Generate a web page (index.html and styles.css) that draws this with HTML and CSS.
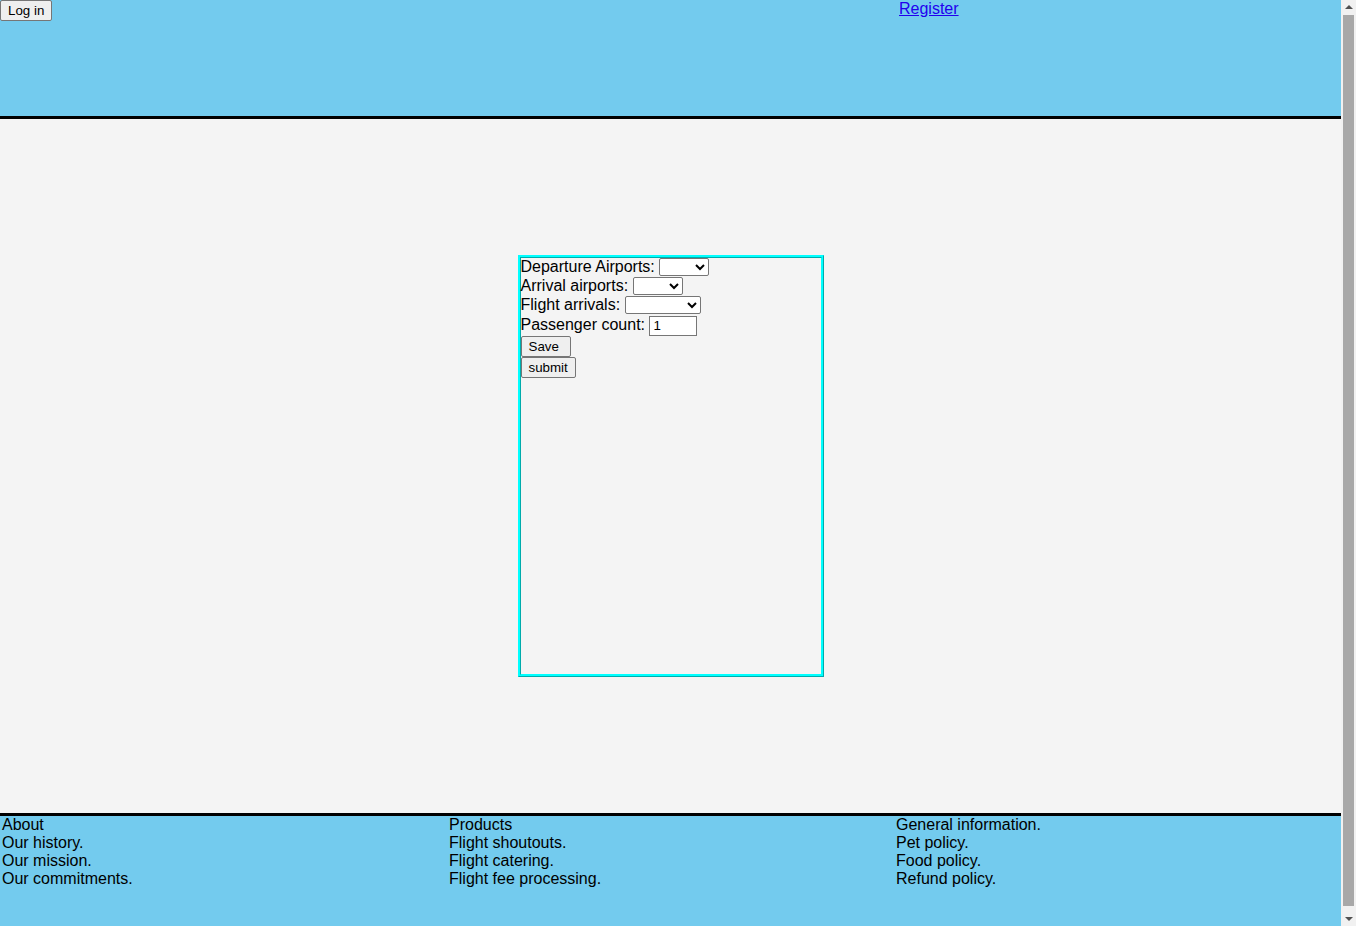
FILE: index.html
```html
<!DOCTYPE html>
<html>
<head>
<meta charset="utf-8">
<title>Flights</title>
<link rel="stylesheet" href="styles.css">
</head>
<body>
<div class="page">
  <header class="site-header">
    <div class="hcol"><button class="btn">Log in</button></div>
    <div class="hcol"></div>
    <div class="hcol hcol-right"><a href="#" class="reg-link">Register</a></div>
  </header>
  <main class="main">
    <form class="booking">
      <div class="row">Departure Airports: <select class="sel sel-a"><option></option></select></div>
      <div class="row">Arrival airports: <select class="sel sel-a"><option></option></select></div>
      <div class="row">Flight arrivals: <select class="sel sel-b"><option></option></select></div>
      <div class="row row-input">Passenger count: <input class="count" type="text" value="1"></div>
      <div class="brow"><button type="button" class="btn btn-save">Save</button></div>
      <div class="brow"><button type="button" class="btn">submit</button></div>
    </form>
  </main>
  <footer class="site-footer">
    <div class="fcol">
      <div>About</div>
      <div>Our history.</div>
      <div>Our mission.</div>
      <div>Our commitments.</div>
    </div>
    <div class="fcol">
      <div>Products</div>
      <div>Flight shoutouts.</div>
      <div>Flight catering.</div>
      <div>Flight fee processing.</div>
    </div>
    <div class="fcol">
      <div>General information.</div>
      <div>Pet policy.</div>
      <div>Food policy.</div>
      <div>Refund policy.</div>
    </div>
  </footer>
</div>
<div class="scrollbar" aria-hidden="true">
  <div class="sb-arrow sb-up"></div>
  <div class="sb-track"><div class="sb-thumb"></div></div>
  <div class="sb-arrow sb-down"></div>
</div>
</body>
</html>
```
FILE: styles.css
```css
html, body {
  margin: 0;
  padding: 0;
}
html {
  overflow: hidden;
}
body {
  font-family: "Liberation Sans", Arial, sans-serif;
  font-size: 16px;
  color: #000;
  background: #f4f4f4;
}
.page {
  margin-right: 15px;
}
.site-header {
  display: grid;
  grid-template-columns: 1fr 1fr 1fr;
  height: 116px;
  background: #73cbee;
  border-bottom: 3px solid #000;
}
.hcol-right {
  padding-left: 5px;
}
.reg-link {
  color: #2200ee;
  text-decoration: underline;
  line-height: 17px;
}
.btn {
  font-family: "Liberation Sans", Arial, sans-serif;
  font-size: 13.333px;
  margin: 0;
  padding: 1px 7px;
  height: 21px;
  background: #efefef;
  border: 1px solid #767676;
  border-radius: 2px;
  color: #000;
}
.main {
  height: 694px;
  display: flex;
  align-items: center;
  justify-content: center;
}
.booking {
  width: 300px;
  height: 416px;
  border: 3px ridge #00ffff;
  margin: 0;
}
.row {
  height: 19px;
  line-height: 18px;
  white-space: nowrap;
}
.row-input {
  height: 21px;
  line-height: 20px;
}
.sel {
  font-family: "Liberation Sans", Arial, sans-serif;
  font-size: 13.333px;
  height: 18px;
  vertical-align: middle;
  margin: -1px 0 0 0;
  background: #fff;
  border: 1px solid #767676;
  border-radius: 2px;
}
.sel-a { width: 50px; }
.sel-b { width: 76px; }
.count {
  font-family: "Liberation Sans", Arial, sans-serif;
  font-size: 13.333px;
  width: 48px;
  height: 20px;
  box-sizing: border-box;
  padding: 1px 3px;
  border: 1px solid #767676;
  vertical-align: middle;
  margin: 0;
}
.brow {
  height: 21px;
}
.btn-save {
  width: 50px;
  text-align: left;
  padding-left: 7px;
}
.site-footer {
  display: grid;
  grid-template-columns: 1fr 1fr 1fr;
  border-top: 3px solid #000;
  background: #73cbee;
  min-height: 130px;
  line-height: 18px;
}
.fcol {
  padding-left: 2px;
}
.scrollbar {
  position: fixed;
  top: 0;
  right: 0;
  bottom: 0;
  width: 15px;
  background: #f1f1f1;
  display: flex;
  flex-direction: column;
}
.sb-arrow {
  height: 15px;
  flex: none;
  position: relative;
}
.sb-up::after,
.sb-down::after {
  content: "";
  position: absolute;
  left: 4px;
  border-left: 4px solid transparent;
  border-right: 4px solid transparent;
}
.sb-up::after {
  top: 5px;
  border-bottom: 4px solid #505050;
}
.sb-down::after {
  top: 6px;
  border-top: 4px solid #505050;
}
.sb-track {
  flex: 1;
  padding: 0 2px 5px;
}
.sb-thumb {
  height: 100%;
  background: #a8a8a8;
}
```
